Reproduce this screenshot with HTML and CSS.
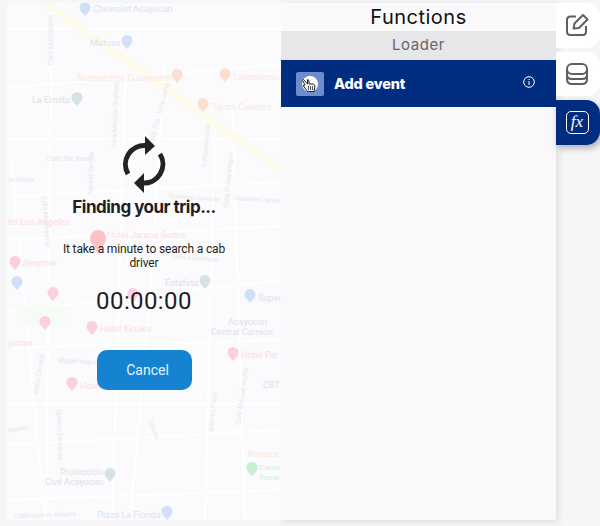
FILE: index.html
```html
<!DOCTYPE html>
<html lang="en">
<head>
<meta charset="utf-8">
<title>Functions</title>
<link rel="stylesheet" href="styles.css">
</head>
<body>
<div class="app">
  <section class="phone">
    <svg class="map" width="274" height="517" viewBox="7 3 274 517">
      <defs>
        <path id="pin" d="M0 7C-3 3.500 -5.500 1.500 -5.500 -1.500A5.500 5.500 0 0 1 5.500 -1.500C5.500 1.500 3 3.500 0 7Z"/>
      </defs>
      <g class="road">
        <path d="M7 29H281M7 88L281 64M7 139H281M7 197L281 182M7 240L281 226M7 312L281 280M7 348L281 340M7 404H281M7 445L281 430M7 500L281 490"/>
        <path d="M52 3L46 520M126 60L112 520M165 60L150 300L130 520M215 120L205 520M232 100L245 520M10 150L45 520M160 400L250 520"/>
      </g>
      <path class="highway" d="M45 3L281 170"/>
      <rect class="park" x="17" y="306" width="48" height="20"/>
      <g class="lbl-blue">
        <text x="93" y="12">Chevrolet Acayucan</text>
        <text x="90" y="46">Matusa</text>
        <text x="258" y="301">Super</text>
        <text x="97" y="518">Plaza La Florida</text>
      </g>
      <g class="lbl-orange">
        <text x="77" y="81">Restaurante Guamuchil</text>
        <text x="233" y="80">Laboratorio</text>
        <text x="212" y="110">Tacos Caseros</text>
        <text x="248" y="457">Restaur</text>
      </g>
      <g class="lbl-pink">
        <text x="8" y="225">tel Los Angeles</text>
        <text x="107" y="238">Hotel Jarana Suites</text>
        <text x="22" y="266">Jesymar</text>
        <text x="100" y="332">Hotel Kinaku</text>
        <text x="241" y="358">Hotel Par</text>
        <text x="80" y="389">Hotel</text>
        <text x="8" y="346">yucan</text>
      </g>
      <g class="lbl-gray">
        <text x="32" y="103">La Ermita</text>
        <text x="165" y="286">Estafeta</text>
        <text x="228" y="325">Acayucan</text>
        <text x="211" y="335">Central Camion</text>
        <text x="263" y="388">CBT</text>
        <text x="60" y="475">Protección</text>
        <text x="45" y="485">Civil Acayucan</text>
      </g>
      <g class="lbl-green">
        <text x="259" y="470">Camp</text>
        <text x="259" y="480">Tama</text>
      </g>
      <g class="lbl-small">
        <text x="47" y="161">Calle Sta. Rosa</text>
        <text x="8" y="182">as Flores</text>
        <text x="169" y="198" transform="rotate(4 169 198)">Gutiérrez Zamora</text>
        <text x="234" y="200" transform="rotate(4 234 200)">Gutiérrez Zamor</text>
        <text x="171" y="258" transform="rotate(5 171 258)">Calle Akamirano</text>
        <text x="58" y="362" transform="rotate(4 58 362)">Miguel Negrete</text>
        <text x="15" y="518" transform="rotate(-2 15 518)">Calle Ignacio Aldama</text>
        <text x="8" y="433" transform="rotate(-12 8 433)">Álvarez</text>
        <text transform="translate(53 65) rotate(-90)">Calle Moctezuma</text>
        <text transform="translate(116 148) rotate(-88)">Calle Melchor Ocampo</text>
        <text transform="translate(153 145) rotate(-75)">Calle Fco. Javier Mina</text>
        <text transform="translate(206 167) rotate(-85)">Independencia</text>
        <text transform="translate(228 208) rotate(-85)">Calle Flores Magón</text>
        <text transform="translate(42 196) rotate(85)">Calle Moctezuma</text>
        <text transform="translate(92 195) rotate(-88)">Aquiles Serdán</text>
        <text transform="translate(57 410) rotate(88)">Ignacio Zaragoza</text>
        <text transform="translate(38 395) rotate(-82)">Pedro Carvajal</text>
        <text transform="translate(148 420) rotate(70)">Doloret</text>
        <text transform="translate(213 432) rotate(-85)">Antonio Plaza</text>
        <text transform="translate(240 425) rotate(-82)">Calle Manuel Acuña</text>
      </g>
      <g class="pin-blue">
        <use href="#pin" x="85" y="9"/><use href="#pin" x="127" y="42"/><use href="#pin" x="250" y="296"/><use href="#pin" x="167" y="513"/><use href="#pin" x="17" y="283"/>
      </g>
      <g class="pin-orange">
        <use href="#pin" x="177" y="76"/><use href="#pin" x="225" y="75"/><use href="#pin" x="203" y="105"/>
      </g>
      <g class="pin-pink">
        <use href="#pin" x="15" y="263"/><use href="#pin" x="53" y="294"/><use href="#pin" x="45" y="323"/><use href="#pin" x="92" y="328"/><use href="#pin" x="133" y="295"/><use href="#pin" x="233" y="354"/><use href="#pin" x="72" y="384"/>
      </g>
      <path class="pin-main" d="M98 255C96 248 90 244 90 238A8 8 0 0 1 106 238C106 244 100 248 98 255Z"/>
      <g class="pin-gray">
        <use href="#pin" x="77" y="99"/><use href="#pin" x="205" y="282"/><use href="#pin" x="110" y="475"/>
      </g>
      <use class="pin-green" href="#pin" x="252" y="469"/>
    </svg>
    <div class="search">
      <svg class="spinner" width="44" height="58" viewBox="122 135 44 58">
        <path class="spin-arc" d="M128 174A19 19 0 0 1 146 145.500M160 154A19 19 0 0 1 142 183"/>
        <path class="spin-head" d="M145 136L155 146L145 155ZM144 173L134 183L144 193Z"/>
      </svg>
      <h1 class="title">Finding your trip...</h1>
      <p class="note">It take a minute to search a cab driver</p>
      <div class="timer">00:00:00</div>
      <button class="cancel">Cancel</button>
    </div>
  </section>

  <section class="panel">
    <header class="panel-title">Functions</header>
    <div class="panel-sub">Loader</div>
    <div class="event">
      <span class="event-icon">
        <svg width="28" height="24" viewBox="0 0 28 24">
          <circle class="hand-disc" cx="14" cy="12" r="8"/>
          <path class="hand" d="M7.500 7.500L11.500 12V7.500L13 8.500V12H17.500L19 14L18 19.500H11.500L7 13.500L9 13L6.500 8.500Z"/>
          <path class="hand-lines" d="M12.500 14V18M14.500 14V18M16.500 14V18"/>
        </svg>
      </span>
      <span class="event-name">Add event</span>
      <svg class="info" width="12" height="12" viewBox="0 0 12 12">
        <circle cx="6" cy="6" r="5.300"/>
        <path d="M6 5.200V9M6 3V4"/>
      </svg>
    </div>
  </section>

  <nav class="tabs">
    <div class="tab">
      <svg width="24" height="24" viewBox="0 0 24 24" class="tab-icon">
        <path d="M21 13V18.500Q21 22 17.500 22H5.500Q2 22 2 18.500V7Q2 3.500 5.500 3.500H11"/>
        <path d="M8.500 15.500L9.500 10.500L18 2L22.500 6.500L14 15Z"/>
      </svg>
    </div>
    <div class="tab">
      <svg width="24" height="24" viewBox="0 0 24 24" class="tab-icon">
        <rect x="2" y="2" width="20" height="10" rx="5"/>
        <path d="M2 7V17Q2 22 7 22H17Q22 22 22 17V7M2 12.500Q2 17 7 17H17Q22 17 22 12.500"/>
      </svg>
    </div>
    <div class="tab tab-active">
      <span class="fx"><span class="fx-text">fx</span></span>
    </div>
  </nav>
</div>
</body>
</html>
```

FILE: styles.css
```css
* { box-sizing: border-box; }

html, body {
  margin: 0;
  height: 100%;
  overflow: hidden;
  background: #f6f5f8;
}

.app {
  display: flex;
  align-items: flex-start;
  width: 600px;
  height: 526px;
  padding: 3px 0 0 7px;
  font-family: Inter, "Liberation Sans", sans-serif;
}

/* left: phone preview over a faded map */
.phone {
  position: relative;
  flex: none;
  width: 274px;
  height: 517px;
  background: #fbfafd;
  overflow: hidden;
}

.map {
  position: absolute;
  inset: 0;
  font-family: Roboto, "Liberation Sans", sans-serif;
  font-size: 9px;
}

.road { fill: none; stroke: #ffffff; stroke-width: 2; }
.highway { fill: none; stroke: #fdfbeb; stroke-width: 8; }
.park { fill: #f5fbf5; }
.lbl-blue { fill: #d8e4f6; }
.lbl-orange { fill: #fce8de; }
.lbl-pink { fill: #fbdce6; }
.lbl-gray { fill: #e0e2e5; }
.lbl-green { fill: #d4efda; font-size: 8px; }
.lbl-small { fill: #e6e7ea; font-size: 6.500px; }
.pin-blue { fill: #d0e0f8; }
.pin-orange { fill: #fcdfd0; }
.pin-pink { fill: #fbd0de; }
.pin-main { fill: #fbc3c8; }
.pin-gray { fill: #d6e3e5; }
.pin-green { fill: #c8eed2; }

.search {
  position: relative;
  display: flex;
  flex-direction: column;
  align-items: center;
  padding-top: 132px;
  color: #1f1f22;
}

.spinner { display: block; }
.spin-arc { fill: none; stroke: #232326; stroke-width: 5; }
.spin-head { fill: #232326; }

.title {
  margin: 2px 0 0;
  font-size: 17px;
  line-height: 24px;
  font-weight: 700;
  letter-spacing: -0.5px;
}

.note {
  width: 180px;
  margin: 23px 0 0;
  font-family: Roboto, "Liberation Sans", sans-serif;
  font-size: 12px;
  line-height: 14px;
  font-weight: 400;
  letter-spacing: -0.15px;
  text-align: center;
}

.timer {
  margin-top: 16px;
  font-family: Roboto, "Liberation Sans", sans-serif;
  font-size: 24px;
  line-height: 30px;
  font-weight: 400;
  letter-spacing: 0.4px;
}

.cancel {
  width: 95px;
  height: 40px;
  margin-top: 34px;
  padding: 0 0 0 7px;
  border: 0;
  border-radius: 10px;
  background: #1682d2;
  color: #e3f3ff;
  font: 400 14px Roboto, "Liberation Sans", sans-serif;
}

/* middle: functions panel */
.panel {
  flex: none;
  width: 275px;
  height: 517px;
  background: #f9f8fb;
  box-shadow: 2px 2px 8px rgba(0, 0, 0, 0.1);
}

.panel-title {
  height: 28px;
  font-size: 20px;
  line-height: 28px;
  letter-spacing: 0.5px;
  text-align: center;
  color: #111;
  background: #fafafc;
}

.panel-sub {
  height: 29px;
  font-size: 15px;
  line-height: 28px;
  letter-spacing: 0.6px;
  text-align: center;
  color: #666669;
  background: #e7e7e9;
}

.event {
  display: flex;
  align-items: center;
  height: 47px;
  padding: 0 21px 0 15px;
  background: #012d81;
  color: #fff;
}

.event-icon {
  display: flex;
  flex: none;
  width: 28px;
  height: 24px;
  border-radius: 2px;
  background: #6d8dcb;
}

.hand-disc { fill: #fff; }
.hand { fill: #f4f4f4; stroke: #222; stroke-width: 1; }
.hand-lines { fill: none; stroke: #333; stroke-width: 0.800; }

.event-name {
  flex: 1;
  margin-left: 10px;
  font-size: 14.500px;
  font-weight: 800;
  letter-spacing: -0.2px;
}

.info { margin-top: -3px; fill: none; stroke: #fff; stroke-width: 1; }

/* right: tabs */
.tabs {
  display: flex;
  flex: none;
  flex-direction: column;
  gap: 4px;
  width: 44px;
}

.tab {
  display: flex;
  align-items: center;
  justify-content: center;
  width: 44px;
  height: 44.500px;
  padding-right: 2px;
  border-radius: 0 14px 14px 0;
  background: #fff;
}

.tab-icon { fill: none; stroke: #5f5f62; stroke-width: 2; stroke-linejoin: round; }

.tab-active {
  background: #012d81;
  box-shadow: 2px 3px 7px rgba(0, 0, 0, 0.3);
}

.fx {
  display: flex;
  align-items: center;
  justify-content: center;
  width: 23px;
  height: 23px;
  border: 1.500px solid #fff;
  border-radius: 5px;
}

.fx-text {
  color: #fff;
  font-family: "Liberation Serif", serif;
  font-size: 17px;
  font-style: italic;
}
```
